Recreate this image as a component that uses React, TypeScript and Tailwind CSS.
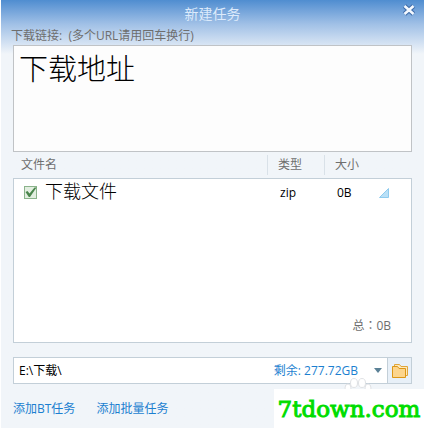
import React from 'react';

const uiFont = "font-['Open_Sans','Noto_Sans_CJK_SC',sans-serif]";

function CloseIcon() {
  return (
    <svg width="14" height="14" viewBox="0 0 14 14" aria-hidden="true">
      <path d="M2.5 3L11.5 11M11.5 3L2.5 11" stroke="#3f6ca8" strokeWidth="4.8" />
      <path d="M2.5 3L11.5 11M11.5 3L2.5 11" stroke="#f4f9ff" strokeWidth="2.6" />
    </svg>
  );
}

function FolderIcon() {
  return (
    <svg width="18" height="16" viewBox="0 0 18 16" aria-hidden="true">
      <path d="M3.5 3.5V1.5H8.5L10 3.5H16.5V12.5H14" fill="#fde9bd" stroke="#e0a63c" />
      <path d="M1.5 14.5V3.5H6.5L8 5.5H14.5V14.5Z" fill="#fcd58d" stroke="#dd9716" />
    </svg>
  );
}

function PawMark() {
  return (
    <svg width="28" height="12" viewBox="0 0 28 12" className="block" aria-hidden="true">
      <g fill="#ffffff" stroke="#e0e2e5" strokeWidth="1">
        <ellipse cx="4" cy="11" rx="3" ry="4" />
        <ellipse cx="24" cy="11" rx="3" ry="4" />
        <ellipse cx="10" cy="6" rx="3.5" ry="4.5" />
        <ellipse cx="18" cy="6" rx="3.5" ry="4.5" />
      </g>
    </svg>
  );
}

export default function App() {
  return (
    <main
      className={`relative min-h-screen border-l border-white bg-[#f1f5f9] bg-linear-to-b from-[#4f8dd0] from-0% via-[#a0c0e6] via-[24px] to-[#f1f5f9] to-[54px] text-xs text-[#6e6e6e] ${uiFont}`}
    >
      <header className="grid h-7 grid-cols-[1fr_auto_1fr] items-center">
        <h1 className="col-start-2 text-sm leading-6 text-[#dceafb]">新建任务</h1>
        <button type="button" aria-label="关闭" className="mr-2 mb-2 justify-self-end">
          <CloseIcon />
        </button>
      </header>

      <form className="px-3" onSubmit={(e) => e.preventDefault()}>
        <label htmlFor="urls" className="-ml-0.5 block h-[17px] leading-4 whitespace-pre">
          {'下载链接:  (多个URL请用回车换行)'}
        </label>
        <textarea
          id="urls"
          defaultValue="下载地址"
          className="block h-[107px] w-full resize-none border border-[#c0c3c6] bg-[#fdfdfd] px-[5px] py-[3px] font-['Noto_Sans_CJK_SC',sans-serif] text-[29px] leading-9 font-light text-black outline-none"
        />

        <table className="w-full table-fixed border-separate border-spacing-0 text-left">
          <colgroup>
            <col />
            <col className="w-[57px]" />
            <col className="w-[88px]" />
          </colgroup>
          <thead>
            <tr className="h-[26px]">
              <th className="p-0 pl-2 font-normal">文件名</th>
              <th className="p-0 font-normal">
                <div className="border-l border-[#d9e1e8] pl-2.5 leading-5">类型</div>
              </th>
              <th className="p-0 font-normal">
                <div className="border-l border-[#d9e1e8] pl-2.5 leading-5">大小</div>
              </th>
            </tr>
          </thead>
          <tbody className="bg-white text-black">
            <tr className="h-7">
              <td className="border-t border-l border-[#c3cfd8] p-0 pl-2.5">
                <label className="flex items-center gap-2">
                  <span className="grid size-[13px]">
                    <input
                      type="checkbox"
                      defaultChecked
                      className="peer col-start-1 row-start-1 size-[13px] appearance-none border border-[#8bb38b] bg-[#e2eee0]"
                    />
                    <svg
                      viewBox="0 0 13 13"
                      className="pointer-events-none invisible col-start-1 row-start-1 size-[13px] peer-checked:visible"
                      aria-hidden="true"
                    >
                      <path d="M1.5 6L3.5 5L5.5 7.5L10.5 1.5H12.5L6 11H4.8Z" fill="#4a854c" />
                    </svg>
                  </span>
                  <span className="pb-1.5 font-['Noto_Sans_CJK_SC',sans-serif] text-lg leading-5 font-light">
                    下载文件
                  </span>
                </label>
              </td>
              <td className="border-t border-[#c3cfd8] p-0 pl-[13px]">zip</td>
              <td className="border-t border-r border-[#c3cfd8] p-0 pl-[13px]">
                <div className="flex items-center justify-between pr-[22px]">
                  0B
                  <svg width="10" height="10" viewBox="0 0 10 10" aria-hidden="true">
                    <path d="M0.5 9.5H9.5V0.5Z" fill="#b9e0f7" stroke="#8fcbee" />
                  </svg>
                </div>
              </td>
            </tr>
          </tbody>
          <tfoot className="bg-white">
            <tr className="h-[137px]">
              <td
                colSpan={3}
                className="border-x border-b border-[#c3cfd8] p-0 pr-5 pb-2 text-right align-bottom font-['Open_Sans','Noto_Sans_CJK_TC',sans-serif]"
              >
                总：0B
              </td>
            </tr>
          </tfoot>
        </table>

        <div className="mt-3.5 flex h-[27px] border border-[#c3cfd8] bg-white">
          <div className="grid flex-1 items-center">
            <select
              aria-label="保存位置"
              className="col-start-1 row-start-1 h-full w-full appearance-none bg-transparent pl-[5px] text-black outline-none"
            >
              <option>E:\下载\</option>
            </select>
            <div className="pointer-events-none col-start-1 row-start-1 flex items-center gap-4 justify-self-end pr-[5px] text-[#1c7fd0]">
              剩余: 277.72GB
              <svg width="8" height="5" viewBox="0 0 8 5" aria-hidden="true">
                <path d="M0 0H8L4 5Z" fill="#5b8196" />
              </svg>
            </div>
          </div>
          <button
            type="button"
            aria-label="浏览文件夹"
            className="flex w-6 items-center justify-center border-l border-[#c3cfd8] bg-[#e8f0f8]"
          >
            <FolderIcon />
          </button>
        </div>

        <nav className="mt-[15px] flex gap-[21px] leading-5 text-[#1c7fd0]">
          <a href="#bt">添加BT任务</a>
          <a href="#batch">添加批量任务</a>
        </nav>
      </form>

      <div className="pointer-events-none absolute right-0 bottom-0">
        <div className="ml-[70px]">
          <PawMark />
        </div>
        <div className="h-[39px] w-[150px] bg-white text-center font-['DejaVu_Serif',serif] text-[23px] leading-10 text-[#00dd00] [-webkit-text-stroke:1px_#00dd00]">
          7tdown.com
        </div>
      </div>
    </main>
  );
}
